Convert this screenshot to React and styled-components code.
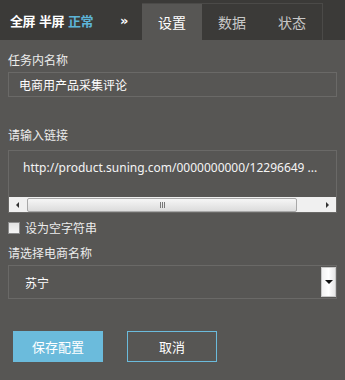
import React from 'react'
import styled, { createGlobalStyle } from 'styled-components'

const GlobalStyle = createGlobalStyle`
  html, body {
    margin: 0;
    padding: 0;
    background: #575654;
  }
  body {
    font-family: "Noto Sans CJK SC", "Noto Sans", sans-serif;
  }
`

const Panel = styled.div`
  width: 345px;
  height: 380px;
  background: #575654;
  color: #ececec;
  overflow: hidden;
`

const Header = styled.div`
  display: flex;
  align-items: stretch;
  height: 40px;
  background: #3b3a38;
`

const ViewSwitch = styled.div`
  display: flex;
  align-items: center;
  gap: 4px;
  padding-left: 10px;
  width: 110px;
  font-size: 13px;
  font-weight: bold;
  letter-spacing: -0.5px;
`

const ViewOption = styled.span`
  color: ${p => (p.$active ? '#5db4d8' : '#ffffff')};
`

const Collapse = styled.span`
  display: flex;
  align-items: center;
  width: 22px;
  color: #ffffff;
  font-family: "DejaVu Sans", sans-serif;
  font-size: 13px;
  font-weight: bold;
`

const Tabs = styled.div`
  display: flex;
  margin-top: 3px;
  border-top: 1px solid #4b4a48;
  border-right: 1px solid #4b4a48;
`

const Tab = styled.div`
  width: 60px;
  display: flex;
  align-items: center;
  justify-content: center;
  font-size: 14px;
  color: ${p => (p.$active ? '#ffffff' : '#c8c8c8')};
  background: ${p => (p.$active ? '#575654' : '#3b3a38')};
  padding-bottom: 1px;
`

const Form = styled.div`
  display: flex;
  flex-direction: column;
  padding: 12px 8px 0;
`

const Label = styled.div`
  font-size: 12px;
  line-height: 16px;
  color: #ececec;
  margin-top: ${p => p.$gap || 0}px;
`

const TextInput = styled.div`
  box-sizing: border-box;
  height: 25px;
  margin-top: 4px;
  border: 1px solid #6a6967;
  padding-left: 10px;
  display: flex;
  align-items: center;
  font-size: 12px;
  color: #ffffff;
`

const TextArea = styled.div`
  box-sizing: border-box;
  margin-top: 7px;
  border: 1px solid #6a6967;
  border-bottom: none;
  height: 47px;
  padding: 8px 0 0 14px;
  font-family: "Noto Sans", "Noto Sans CJK SC", sans-serif;
  font-size: 12px;
  color: #f4f4f4;
  white-space: nowrap;
  overflow: hidden;
`

const Scrollbar = styled.div`
  display: flex;
  align-items: center;
  height: 16px;
  background: #f0f0f0;
  border: 1px solid #6a6967;
  border-top: none;
  box-sizing: border-box;
`

const Arrow = styled.div`
  width: 17px;
  display: flex;
  align-items: center;
  justify-content: center;
  &::after {
    content: '';
    border-top: 3px solid transparent;
    border-bottom: 3px solid transparent;
    ${p => (p.$right ? 'border-left: 3px solid #333;' : 'border-right: 3px solid #333;')}
  }
`

const Thumb = styled.div`
  box-sizing: border-box;
  width: 270px;
  height: 14px;
  margin-left: 1px;
  border: 1px solid #a8a8a8;
  border-radius: 2px;
  background: linear-gradient(#f6f6f6, #dcdcdc);
  display: flex;
  align-items: center;
  justify-content: center;
  gap: 1px;
`

const Grip = styled.span`
  width: 1px;
  height: 6px;
  background: #777;
`

const Spacer = styled.div`
  flex: 1;
`

const CheckRow = styled.label`
  display: flex;
  align-items: center;
  gap: 5px;
  margin-top: 6px;
  font-size: 12px;
  color: #ececec;
`

const CheckBox = styled.span`
  box-sizing: border-box;
  width: 12px;
  height: 12px;
  border: 1px solid #8c8c8c;
  background: linear-gradient(#e2e2e2, #f6f6f6);
`

const Select = styled.div`
  box-sizing: border-box;
  height: 34px;
  margin-top: 4px;
  border: 1px solid #6a6967;
  display: flex;
  align-items: center;
  padding-left: 16px;
  font-size: 12px;
  color: #ffffff;
`

const DropButton = styled.div`
  box-sizing: border-box;
  width: 15px;
  height: 30px;
  border: 1px solid #c9c9c9;
  background: linear-gradient(90deg, #f2f2f2, #ffffff 50%, #e6e6e6);
  display: flex;
  align-items: center;
  justify-content: center;
  &::after {
    content: '';
    border-left: 4px solid transparent;
    border-right: 4px solid transparent;
    border-top: 4px solid #111;
  }
`

const Actions = styled.div`
  display: flex;
  gap: 24px;
  margin-top: 32px;
  padding-left: 5px;
`

const Button = styled.button`
  box-sizing: border-box;
  width: 90px;
  height: 31px;
  font-family: inherit;
  font-size: 13px;
  color: #ffffff;
  background: ${p => (p.$primary ? '#6bbbdc' : 'transparent')};
  border: 1px solid #6bbbdc;
  cursor: pointer;
`

export default function App () {
  return (
    <Panel>
      <GlobalStyle />
      <Header>
        <ViewSwitch>
          <ViewOption>全屏</ViewOption>
          <ViewOption>半屏</ViewOption>
          <ViewOption $active>正常</ViewOption>
        </ViewSwitch>
        <Collapse>»</Collapse>
        <Tabs>
          <Tab $active>设置</Tab>
          <Tab>数据</Tab>
          <Tab>状态</Tab>
        </Tabs>
      </Header>
      <Form>
        <Label>任务内名称</Label>
        <TextInput>电商用产品采集评论</TextInput>
        <Label $gap={30}>请输入链接</Label>
        <TextArea>http://product.suning.com/0000000000/12296649 ...</TextArea>
        <Scrollbar>
          <Arrow />
          <Thumb><Grip /><Grip /><Grip /></Thumb>
          <Spacer />
          <Arrow $right />
        </Scrollbar>
        <CheckRow>
          <CheckBox />
          设为空字符串
        </CheckRow>
        <Label $gap={9}>请选择电商名称</Label>
        <Select>
          苏宁
          <Spacer />
          <DropButton />
        </Select>
        <Actions>
          <Button $primary>保存配置</Button>
          <Button>取消</Button>
        </Actions>
      </Form>
    </Panel>
  )
}
